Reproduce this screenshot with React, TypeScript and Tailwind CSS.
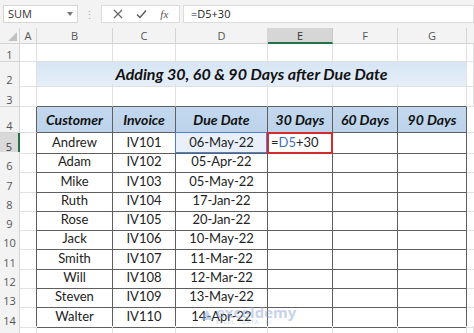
import React from 'react';

const GRID = 'grid grid-cols-[20px_17px_76px_63px_92px_65px_65px_69px_7px]';
const CELL_FONT = { fontFamily: 'Lato, "Liberation Sans", sans-serif' };
const UI_FONT = { fontFamily: '"Open Sans", "Noto Sans", sans-serif' };

const ROWS = [
  { name: 'Andrew', inv: 'IV101', due: '06-May-22' },
  { name: 'Adam', inv: 'IV102', due: '05-Apr-22' },
  { name: 'Mike', inv: 'IV103', due: '05-May-22' },
  { name: 'Ruth', inv: 'IV104', due: '17-Jan-22' },
  { name: 'Rose', inv: 'IV105', due: '20-Jan-22' },
  { name: 'Jack', inv: 'IV106', due: '10-May-22' },
  { name: 'Smith', inv: 'IV107', due: '11-Mar-22' },
  { name: 'Will', inv: 'IV108', due: '12-Mar-22' },
  { name: 'Steven', inv: 'IV109', due: '13-May-22' },
  { name: 'Walter', inv: 'IV110', due: '14-Apr-22' },
];

const DATA_H = ['h-[19px]', 'h-[20px]', 'h-[19px]', 'h-[19px]', 'h-[19px]', 'h-[20px]', 'h-[19px]', 'h-[19px]', 'h-[20px]', 'h-[19px]'];

const LIGHT = 'border-r border-b border-[#e0e0e0]';
const DARK = 'border-r border-b border-[#5f5f5f]';
const A_EDGE = 'border-r border-b border-r-[#5f5f5f] border-b-[#e0e0e0]';

function RowHead({ n, active }: { n?: number; active?: boolean }) {
  return (
    <div
      style={UI_FONT}
      className={
        active
          ? 'flex items-end justify-center pb-[1px] text-[11px] leading-none text-[#444] bg-[#d9d9d9] border-b border-[#c8c8c8] border-r-2 border-r-[#217346]'
          : 'flex items-end justify-center pb-[1px] text-[11px] leading-none text-[#555] bg-[#f3f3f3] border-r border-b border-[#d4d4d4]'
      }
    >
      {n}
    </div>
  );
}

function EmptyRow({ n, h }: { n?: number; h: string }) {
  return (
    <div className={`${GRID} ${h}`}>
      <RowHead n={n} />
      {Array.from({ length: 8 }).map((_, i) => (
        <div key={i} className={LIGHT} />
      ))}
    </div>
  );
}

export default function App() {
  const cols = ['A', 'B', 'C', 'D', 'E', 'F', 'G'];
  return (
    <div className="relative w-[474px] h-[333px] overflow-hidden bg-white" style={CELL_FONT}>
      {/* formula bar */}
      <div className="h-[28px] bg-[#f3f3f3] flex items-center gap-[3px] pl-[3px]" style={UI_FONT}>
        <div className="w-[75px] h-[18px] bg-white border border-[#d6d6d6] flex items-center justify-between px-[4px]">
          <span className="text-[11px] text-[#333]">SUM</span>
          <svg width="6" height="4" viewBox="0 0 6 4"><path d="M0 0h6L3 4z" fill="#777" /></svg>
        </div>
        <div className="w-[17px] flex justify-center text-[#aaa] text-[11px] leading-none">⋮</div>
        <div className="w-[79px] h-[18px] bg-white border border-[#dcdcdc] flex items-center justify-around px-[4px] text-[#555]">
          <svg width="10" height="10" viewBox="0 0 10 10"><path d="M1 1l8 8M9 1l-8 8" stroke="#666" strokeWidth="1.2" /></svg>
          <svg width="11" height="10" viewBox="0 0 11 10"><path d="M1 5.5l3 3 6-7" stroke="#555" strokeWidth="1.3" fill="none" /></svg>
          <span className="text-[11px] italic text-[#555]" style={{ fontFamily: '"Liberation Serif", serif' }}>fx</span>
        </div>
        <div className="flex-1 h-[18px] bg-white border border-[#dcdcdc] flex items-center pl-[7px]">
          <span className="text-[11px] text-[#222]">=D5+30</span>
        </div>
      </div>

      {/* column headers */}
      <div className={`${GRID} h-[16px] bg-[#f3f3f3]`} style={UI_FONT}>
        <div className="relative border-r border-b border-[#d4d4d4]">
          <svg className="absolute right-[2px] bottom-[2px]" width="9" height="9" viewBox="0 0 9 9"><path d="M9 0v9H0z" fill="#c2c2c2" /></svg>
        </div>
        {cols.map((c) =>
          c === 'E' ? (
            <div key={c} className="flex items-center justify-center text-[11px] leading-none text-[#333] bg-[#d6d6d6] border-r border-[#c8c8c8] border-b-2 border-b-[#217346]">
              {c}
            </div>
          ) : (
            <div key={c} className="flex items-center justify-center text-[11px] leading-none text-[#555] border-r border-b border-[#d4d4d4]">
              {c}
            </div>
          )
        )}
        <div className="border-b border-[#d4d4d4]" />
      </div>

      <EmptyRow n={1} h="h-[18px]" />

      {/* title row */}
      <div className={`${GRID} h-[22px]`}>
        <RowHead n={2} />
        <div className={LIGHT} />
        <div className="col-span-6 border-r border-b border-[#e0e0e0] bg-gradient-to-b from-[#d6e5f4] to-[#e6eff9] flex items-center justify-center">
          <span className="text-[16px] font-bold italic text-[#111]">Adding 30, 60 &amp; 90 Days after Due Date</span>
        </div>
        <div className={LIGHT} />
      </div>

      {/* row 3 */}
      <div className={`${GRID} h-[23px]`}>
        <RowHead n={3} />
        <div className={LIGHT} />
        {Array.from({ length: 6 }).map((_, i) => (
          <div key={i} className="border-r border-b border-r-[#e0e0e0] border-b-[#5f5f5f]" />
        ))}
        <div className={LIGHT} />
      </div>

      {/* header row */}
      <div className={`${GRID} h-[26px]`}>
        <RowHead n={4} />
        <div className={A_EDGE} />
        {['Customer', 'Invoice', 'Due Date', '30 Days', '60 Days', '90 Days'].map((t) => (
          <div key={t} className={`${DARK} bg-gradient-to-b from-[#c3d8ee] to-[#bcd3eb] flex items-center justify-center text-[14px] font-bold italic text-[#111]`}>
            {t}
          </div>
        ))}
        <div className="border-b border-[#e0e0e0]" />
      </div>

      {/* data rows */}
      {ROWS.map((r, i) => (
        <div key={r.inv} className={`${GRID} ${DATA_H[i]}`}>
          <RowHead n={i + 5} active={i === 0} />
          <div className={A_EDGE} />
          <div className={`${DARK} flex items-center justify-center text-[13px] text-[#222]`}>{r.name}</div>
          <div className={`${DARK} flex items-center justify-center text-[13px] text-[#222]`}>{r.inv}</div>
          {i === 0 ? (
            <div className={`${DARK} relative bg-[#e9f0f9] flex items-center justify-center text-[13px] text-[#222]`}>
              <div className="absolute -left-[1px] -top-[1px] right-0 bottom-0 border border-[#4f7fcf]" />
              <span className="relative">{r.due}</span>
            </div>
          ) : (
            <div className={`${DARK} flex items-center justify-center text-[13px] text-[#222]`}>{r.due}</div>
          )}
          {i === 0 ? (
            <div className={`${DARK} relative flex items-center pl-[1px] text-[13px] text-[#222]`}>
              <div className="absolute -left-[1px] -top-[1px] right-[-1px] bottom-[-1px] border-2 border-[#d42a2a]" />
              <span className="relative pl-[2px]">
                =<span className="text-[#3f6fc4]">D5</span>+30
              </span>
            </div>
          ) : (
            <div className={DARK} />
          )}
          <div className={DARK} />
          <div className={DARK} />
          <div className="border-b border-[#e0e0e0]" />
        </div>
      ))}

      <EmptyRow h="h-[19px]" />

      {/* watermark */}
      <div className="absolute left-[200px] top-[305px] flex items-center gap-[2px] opacity-50 pointer-events-none">
        <svg width="14" height="12" viewBox="0 0 14 12">
          <path d="M1 11L7 1l6 10z" fill="#8fa8d8" />
        </svg>
        <div className="flex flex-col leading-none">
          <span className="text-[15px] font-bold text-[#8fa8d8]" style={UI_FONT}>exceldemy</span>
          <span className="text-[5px] tracking-[1px] text-[#8fa8d8]" style={UI_FONT}>EXCEL · DATA · BI</span>
        </div>
      </div>
    </div>
  );
}
